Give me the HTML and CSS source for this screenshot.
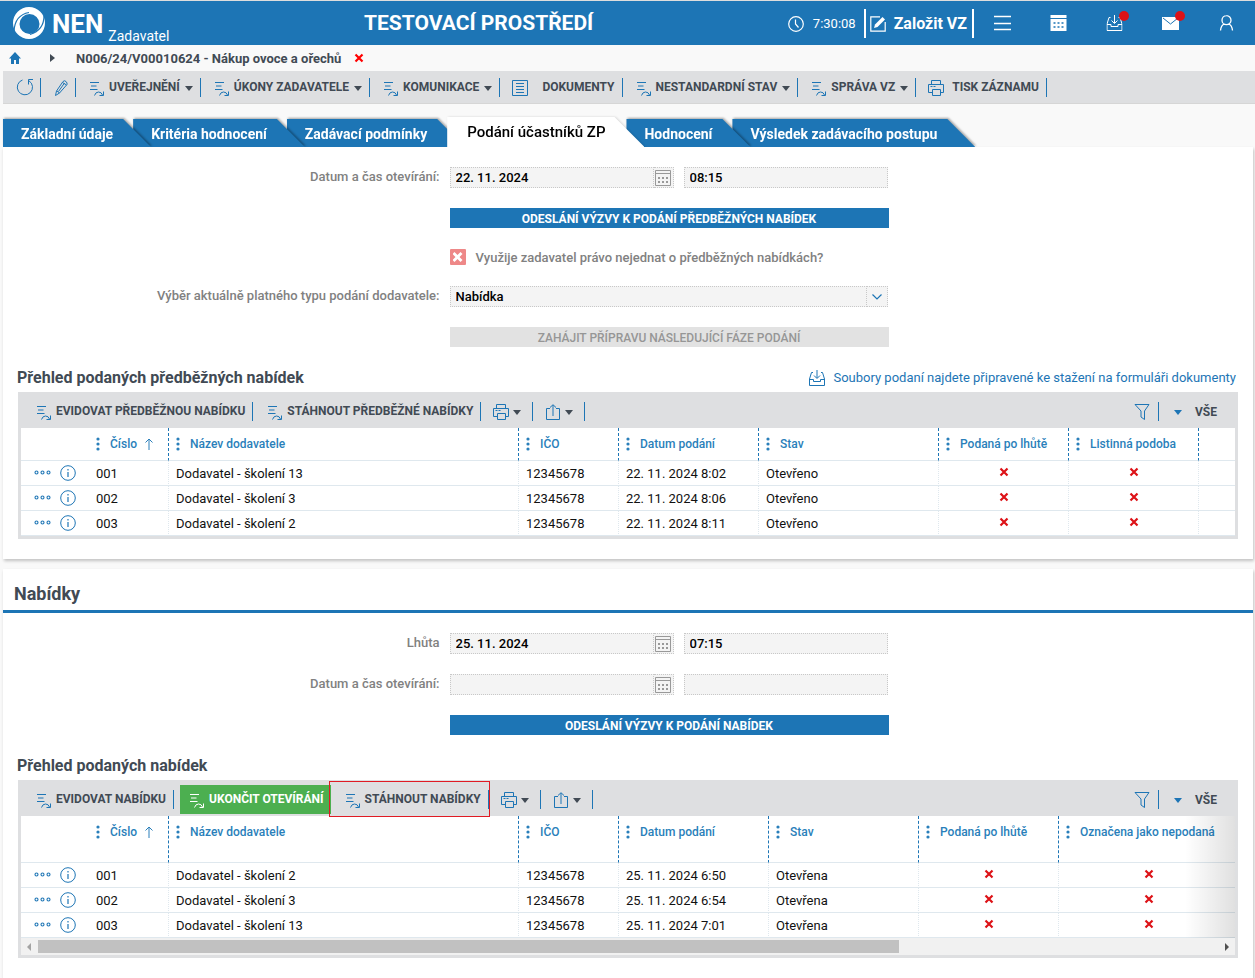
FILE: index.html
```html
<!DOCTYPE html>
<html lang="cs">
<head>
<meta charset="utf-8">
<title>NEN – Podání účastníků ZP</title>
<link rel="stylesheet" href="styles.css">
</head>
<body>
<svg class="sprite" aria-hidden="true">
  <symbol id="i-action" viewBox="0 0 14 14"><path d="M0 .5h9M1 4h5.500M0 7.500h7.500M4.500 13.500q1-3.500 4-3.500t4 3M13.500 9.500v4h-4" fill="none" stroke="currentColor"/></symbol>
  <symbol id="i-caret" viewBox="0 0 8 5"><path d="M0 0h8L4 5z" fill="currentColor"/></symbol>
  <symbol id="i-x" viewBox="0 0 10 10"><path d="M1.500 1.500l7 7M8.500 1.500l-7 7" stroke="currentColor" stroke-width="2.200" fill="none"/></symbol>
  <symbol id="i-print" viewBox="0 0 16 16"><path d="M3.500 4V.5h9V4M4.500 12.500h-4v-8h15v8h-3M4.500 9.500h8v6h-8zM2.500 6.500h2M5.500 6.500h2" fill="none" stroke="currentColor"/></symbol>
  <symbol id="i-share" viewBox="0 0 14 16"><path d="M4 4.500H.5v11h13v-11H10M7 12V1M4 3.500L7 .7l3 2.800" fill="none" stroke="currentColor"/></symbol>
  <symbol id="i-funnel" viewBox="0 0 16 16"><path d="M1 .5h14L10.500 7v8.500L7 13V7z" fill="none" stroke="currentColor"/></symbol>
  <symbol id="i-inbox" viewBox="0 0 16 16"><path d="M4 2.500H2.500L.5 9v6.500h15V9l-2-6.500H12M.5 9.500h4v2h7v-2h4M8 0v8M5 5.500l3 3 3-3" fill="none" stroke="currentColor"/></symbol>
  <symbol id="i-cal" viewBox="0 0 16 16"><path d="M.5.500h15v15H.5zM.5 3.500h15" fill="none" stroke="currentColor"/><path d="M3 7h2v2H3zM7 7h2v2H7zM11 7h2v2h-2zM3 11h2v2H3zM7 11h2v2H7zM11 11h2v2h-2z" fill="currentColor"/></symbol>
  <symbol id="i-more" viewBox="0 0 17 5"><g fill="none" stroke="currentColor" stroke-width="1.100"><circle cx="2.500" cy="2.500" r="1.500"/><circle cx="8.500" cy="2.500" r="1.500"/><circle cx="14.500" cy="2.500" r="1.500"/></g></symbol>
  <symbol id="i-info" viewBox="0 0 16 16"><circle cx="8" cy="8" r="7.300" fill="none" stroke="currentColor"/><path d="M8 4v1.500M8 7v5" stroke="currentColor" stroke-width="1.200"/></symbol>
  <symbol id="i-dots" viewBox="0 0 4 14"><g fill="currentColor"><circle cx="2" cy="2" r="1.600"/><circle cx="2" cy="7" r="1.600"/><circle cx="2" cy="12" r="1.600"/></g></symbol>
  <symbol id="i-up" viewBox="0 0 8 12"><path d="M4 12V1M.5 4.500L4 1l3.500 3.500" fill="none" stroke="currentColor"/></symbol>
</svg>

<header class="topbar">
  <a class="brand" href="#">
    <svg class="brand-mark" viewBox="0 0 32 32" aria-hidden="true"><path fill="#fff" fill-rule="evenodd" d="M16 0a16 16 0 1 1 0 32a16 16 0 1 1 0-32zM16.500 7a10 10 0 1 0 0 20a10 10 0 1 0 0-20z"/><path d="M1 24Q2 8 16 5.500M31 9q0 14-14 18.500" fill="none" stroke="#1d75b5" stroke-width="1.200"/></svg>
    <span class="brand-name">NEN</span><span class="brand-role">Zadavatel</span>
  </a>
  <div class="env">TESTOVACÍ PROSTŘEDÍ</div>
  <div class="top-tools">
    <span class="clock"><svg class="ic16" viewBox="0 0 16 16" aria-hidden="true"><path d="M8 .7a7.300 7.300 0 1 1 0 14.600a7.300 7.300 0 1 1 0-14.600M7.500 3.500V8l3 3.500" fill="none" stroke="currentColor" stroke-width="1.200"/></svg>7:30:08</span>
    <button class="create"><svg class="ic16" viewBox="0 0 16 16" aria-hidden="true"><path d="M10 .8H.8v14.400h14.400V6" fill="none" stroke="currentColor" stroke-width="1.200"/><path d="M4 12l1-3.500L12.500 1 15 3.500 7.500 11z" fill="currentColor"/></svg>Založit VZ</button>
    <button class="nav-btn" aria-label="Menu"><svg viewBox="0 0 17 16"><path d="M0 1.500h17M0 8.500h17M0 14.500h17" stroke="currentColor" stroke-width="1.500"/></svg></button>
    <button class="nav-btn" aria-label="Kalendář"><svg viewBox="0 0 16 16"><path d="M0 0h16v3H0z M0 4h16v12H0z" fill="currentColor"/><path d="M3 8h2M7 8h2M11 8h2M3 12h2M7 12h2M11 12h2" stroke="#1d75b5" stroke-width="1.500"/></svg></button>
    <button class="nav-btn has-dot" aria-label="Ke stažení"><svg viewBox="0 0 16 16"><use href="#i-inbox"/></svg></button>
    <button class="nav-btn has-dot" aria-label="Zprávy"><svg viewBox="0 0 17 16"><path d="M0 2h17v13H0z" fill="currentColor"/><path d="M1 3l7.500 6L16 3" stroke="#1d75b5" fill="none"/></svg></button>
    <button class="nav-btn" aria-label="Uživatel"><svg viewBox="0 0 16 16"><path d="M8 .7a4.300 4.300 0 1 1 0 9a4.300 4.300 0 1 1 0-9M2 15.500q.5-5.500 4-6.500M14 15.500q-.5-5.500-4-6.500" fill="none" stroke="currentColor" stroke-width="1.300"/></svg></button>
  </div>
</header>

<nav class="crumbs" aria-label="Drobečková navigace">
  <a class="home" href="#" aria-label="Domů"><svg viewBox="0 0 12 12"><path d="M6 0l6 6.500h-2V12H7V8H5v4H2V6.500H0z" fill="currentColor"/></svg></a>
  <svg class="crumb-arrow" viewBox="0 0 5 8" aria-hidden="true"><path d="M0 0l5 4-5 4z" fill="currentColor"/></svg>
  <span class="crumb-title">N006/24/V00010624 - Nákup ovoce a ořechů</span>
  <button class="crumb-close" aria-label="Zavřít"><svg viewBox="0 0 10 10"><use href="#i-x"/></svg></button>
</nav>

<div class="toolbar">
  <button class="tool icon-tool" aria-label="Obnovit"><svg class="ic18" viewBox="0 0 18 18"><path d="M6.500 2A7.600 7.600 0 1 0 13 2.800M17 1.500h-4.500v5" fill="none" stroke="currentColor"/></svg></button>
  <button class="tool icon-tool pen" aria-label="Upravit"><svg class="ic16" viewBox="0 0 16 16"><path d="M2.500 15.500L3.500 11 10 1.500q1.500-1.500 3 0t1 3L6.500 13zM4 11l2.500 2M5.500 11.500L11.500 3M9.500 2.500l4 2.500" fill="none" stroke="currentColor"/></svg></button>
  <button class="tool"><svg class="ic14"><use href="#i-action"/></svg><span>UVEŘEJNĚNÍ</span><svg class="caret"><use href="#i-caret"/></svg></button>
  <button class="tool"><svg class="ic14"><use href="#i-action"/></svg><span>ÚKONY ZADAVATELE</span><svg class="caret"><use href="#i-caret"/></svg></button>
  <button class="tool"><svg class="ic14"><use href="#i-action"/></svg><span>KOMUNIKACE</span><svg class="caret"><use href="#i-caret"/></svg></button>
  <button class="tool wide"><svg class="ic16" viewBox="0 0 16 16"><path d="M.5.500h15v15H.5zM4 3.500h8M4 6.500h8M4 9.500h8M4 12.500h8" fill="none" stroke="currentColor"/></svg><span>DOKUMENTY</span></button>
  <button class="tool"><svg class="ic14"><use href="#i-action"/></svg><span>NESTANDARDNÍ STAV</span><svg class="caret"><use href="#i-caret"/></svg></button>
  <button class="tool"><svg class="ic14"><use href="#i-action"/></svg><span>SPRÁVA VZ</span><svg class="caret"><use href="#i-caret"/></svg></button>
  <button class="tool print"><svg class="ic16"><use href="#i-print"/></svg><span>TISK ZÁZNAMU</span></button>
</div>

<nav class="tabs" aria-label="Záložky">
  <div class="tab t1"><a href="#">Základní údaje</a></div>
  <div class="tab t2"><a href="#">Kritéria hodnocení</a></div>
  <div class="tab t3"><a href="#">Zadávací podmínky</a></div>
  <div class="tab active"><a href="#" aria-current="page">Podání účastníků ZP</a></div>
  <div class="tab t5"><a href="#">Hodnocení</a></div>
  <div class="tab t6"><a href="#">Výsledek zadávacího postupu</a></div>
</nav>

<main>
<section class="panel first">
  <div class="form">
    <label for="d1">Datum a čas otevírání:</label>
    <div class="pair">
      <div class="date"><input id="d1" type="text" value="22. 11. 2024" readonly><button aria-label="Vybrat datum"><svg class="ic16"><use href="#i-cal"/></svg></button></div>
      <input class="time" type="text" value="08:15" aria-label="Čas otevírání" readonly>
    </div>
    <button class="btn">ODESLÁNÍ VÝZVY K PODÁNÍ PŘEDBĚŽNÝCH NABÍDEK</button>
    <div class="check"><input id="c1" type="checkbox"><label for="c1">Využije zadavatel právo nejednat o předběžných nabídkách?</label></div>
    <label for="s1">Výběr aktuálně platného typu podání dodavatele:</label>
    <div class="select"><select id="s1"><option>Nabídka</option></select><span class="select-arrow"><svg viewBox="0 0 10 6" aria-hidden="true"><path d="M.5.500L5 5 9.500.5" fill="none" stroke="currentColor" stroke-width="1.200"/></svg></span></div>
    <button class="btn" disabled>ZAHÁJIT PŘÍPRAVU NÁSLEDUJÍCÍ FÁZE PODÁNÍ</button>
  </div>

  <div class="list-head">
    <h2>Přehled podaných předběžných nabídek</h2>
    <a href="#"><svg class="ic16"><use href="#i-inbox"/></svg>Soubory podaní najdete připravené ke stažení na formuláři dokumenty</a>
  </div>
  <div class="grid-box">
    <div class="grid-bar">
      <button class="tool"><svg class="ic14"><use href="#i-action"/></svg><span>EVIDOVAT PŘEDBĚŽNOU NABÍDKU</span></button>
      <button class="tool"><svg class="ic14"><use href="#i-action"/></svg><span>STÁHNOUT PŘEDBĚŽNÉ NABÍDKY</span></button>
      <button class="tool mini" aria-label="Tisk"><svg class="ic16"><use href="#i-print"/></svg><svg class="caret"><use href="#i-caret"/></svg></button>
      <button class="tool mini" aria-label="Export"><svg class="ic16"><use href="#i-share"/></svg><svg class="caret"><use href="#i-caret"/></svg></button>
      <div class="grid-filter">
        <button class="tool funnel" aria-label="Filtr"><svg class="ic16"><use href="#i-funnel"/></svg></button>
        <button class="all"><svg class="caret"><use href="#i-caret"/></svg>VŠE</button>
      </div>
    </div>
    <table>
      <colgroup><col class="w-act"><col class="w-num"><col class="w-name"><col class="w-ico"><col class="w-140"><col class="w-180"><col class="w-130"><col class="w-130"><col></colgroup>
      <thead><tr>
        <th class="plain"></th>
        <th><svg class="dots"><use href="#i-dots"/></svg>Číslo<svg class="sort"><use href="#i-up"/></svg></th>
        <th><svg class="dots"><use href="#i-dots"/></svg>Název dodavatele</th>
        <th><svg class="dots"><use href="#i-dots"/></svg>IČO</th>
        <th><svg class="dots"><use href="#i-dots"/></svg>Datum podání</th>
        <th><svg class="dots"><use href="#i-dots"/></svg>Stav</th>
        <th><svg class="dots"><use href="#i-dots"/></svg>Podaná po lhůtě</th>
        <th><svg class="dots"><use href="#i-dots"/></svg>Listinná podoba</th>
        <th class="plain"></th>
      </tr></thead>
      <tbody>
        <tr><td class="act"><svg class="more"><use href="#i-more"/></svg><svg class="ic16"><use href="#i-info"/></svg></td><td>001</td><td>Dodavatel - školení 13</td><td>12345678</td><td>22. 11. 2024 8:02</td><td>Otevřeno</td><td class="no"><svg><use href="#i-x"/></svg></td><td class="no"><svg><use href="#i-x"/></svg></td><td class="last"></td></tr>
        <tr><td class="act"><svg class="more"><use href="#i-more"/></svg><svg class="ic16"><use href="#i-info"/></svg></td><td>002</td><td>Dodavatel - školení 3</td><td>12345678</td><td>22. 11. 2024 8:06</td><td>Otevřeno</td><td class="no"><svg><use href="#i-x"/></svg></td><td class="no"><svg><use href="#i-x"/></svg></td><td class="last"></td></tr>
        <tr><td class="act"><svg class="more"><use href="#i-more"/></svg><svg class="ic16"><use href="#i-info"/></svg></td><td>003</td><td>Dodavatel - školení 2</td><td>12345678</td><td>22. 11. 2024 8:11</td><td>Otevřeno</td><td class="no"><svg><use href="#i-x"/></svg></td><td class="no"><svg><use href="#i-x"/></svg></td><td class="last"></td></tr>
      </tbody>
    </table>
  </div>
</section>

<section class="panel">
  <h1>Nabídky</h1>
  <div class="form">
    <label for="d2">Lhůta</label>
    <div class="pair">
      <div class="date"><input id="d2" type="text" value="25. 11. 2024" readonly><button aria-label="Vybrat datum"><svg class="ic16"><use href="#i-cal"/></svg></button></div>
      <input class="time" type="text" value="07:15" aria-label="Čas lhůty" readonly>
    </div>
    <label for="d3">Datum a čas otevírání:</label>
    <div class="pair">
      <div class="date"><input id="d3" type="text" readonly><button aria-label="Vybrat datum"><svg class="ic16"><use href="#i-cal"/></svg></button></div>
      <input class="time" type="text" aria-label="Čas otevírání nabídek" readonly>
    </div>
    <button class="btn">ODESLÁNÍ VÝZVY K PODÁNÍ NABÍDEK</button>
  </div>

  <div class="list-head"><h2>Přehled podaných nabídek</h2></div>
  <div class="grid-box">
    <div class="grid-bar">
      <button class="tool"><svg class="ic14"><use href="#i-action"/></svg><span>EVIDOVAT NABÍDKU</span></button>
      <button class="tool green"><svg class="ic14"><use href="#i-action"/></svg><span>UKONČIT OTEVÍRÁNÍ</span></button>
      <button class="tool marked"><svg class="ic14"><use href="#i-action"/></svg><span>STÁHNOUT NABÍDKY</span></button>
      <button class="tool mini" aria-label="Tisk"><svg class="ic16"><use href="#i-print"/></svg><svg class="caret"><use href="#i-caret"/></svg></button>
      <button class="tool mini" aria-label="Export"><svg class="ic16"><use href="#i-share"/></svg><svg class="caret"><use href="#i-caret"/></svg></button>
      <div class="grid-filter">
        <button class="tool funnel" aria-label="Filtr"><svg class="ic16"><use href="#i-funnel"/></svg></button>
        <button class="all"><svg class="caret"><use href="#i-caret"/></svg>VŠE</button>
      </div>
    </div>
    <div class="faded">
    <table class="tall">
      <colgroup><col class="w-act"><col class="w-num"><col class="w-name"><col class="w-ico"><col class="w-150"><col class="w-150"><col class="w-140"><col></colgroup>
      <thead><tr>
        <th class="plain"></th>
        <th><svg class="dots"><use href="#i-dots"/></svg>Číslo<svg class="sort"><use href="#i-up"/></svg></th>
        <th><svg class="dots"><use href="#i-dots"/></svg>Název dodavatele</th>
        <th><svg class="dots"><use href="#i-dots"/></svg>IČO</th>
        <th><svg class="dots"><use href="#i-dots"/></svg>Datum podání</th>
        <th><svg class="dots"><use href="#i-dots"/></svg>Stav</th>
        <th><svg class="dots"><use href="#i-dots"/></svg>Podaná po lhůtě</th>
        <th class="plain"><svg class="dots"><use href="#i-dots"/></svg>Označena jako nepodaná</th>
      </tr></thead>
      <tbody>
        <tr><td class="act"><svg class="more"><use href="#i-more"/></svg><svg class="ic16"><use href="#i-info"/></svg></td><td>001</td><td>Dodavatel - školení 2</td><td>12345678</td><td>25. 11. 2024 6:50</td><td>Otevřena</td><td class="no"><svg><use href="#i-x"/></svg></td><td class="no last"><svg><use href="#i-x"/></svg></td></tr>
        <tr><td class="act"><svg class="more"><use href="#i-more"/></svg><svg class="ic16"><use href="#i-info"/></svg></td><td>002</td><td>Dodavatel - školení 3</td><td>12345678</td><td>25. 11. 2024 6:54</td><td>Otevřena</td><td class="no"><svg><use href="#i-x"/></svg></td><td class="no last"><svg><use href="#i-x"/></svg></td></tr>
        <tr><td class="act"><svg class="more"><use href="#i-more"/></svg><svg class="ic16"><use href="#i-info"/></svg></td><td>003</td><td>Dodavatel - školení 13</td><td>12345678</td><td>25. 11. 2024 7:01</td><td>Otevřena</td><td class="no"><svg><use href="#i-x"/></svg></td><td class="no last"><svg><use href="#i-x"/></svg></td></tr>
      </tbody>
    </table>
    </div>
    <div class="scrollbar" aria-hidden="true">
      <svg class="sb-left" viewBox="0 0 4 8"><path d="M4 0L0 4l4 4z" fill="currentColor"/></svg>
      <div class="sb-track"><div class="sb-thumb"></div></div>
      <svg class="sb-right" viewBox="0 0 4 8"><path d="M0 0l4 4-4 4z" fill="currentColor"/></svg>
    </div>
  </div>
</section>
</main>
</body>
</html>
```
FILE: styles.css
```css
:root {
  --blue: #1d75b5;
  --grey: #dedfe1;
  --ink: #414a54;
  --label: #818181;
  --line: #dfe8ee;
}

* { box-sizing: border-box; }

body {
  margin: 0;
  background: #f9f9f9;
  color: #111;
  font: 13px/20px Roboto, "Noto Sans", sans-serif;
}

button, input, select { font: inherit; color: inherit; margin: 0; border-radius: 0; }
button { background: none; border: 0; padding: 0; }
a { color: inherit; text-decoration: none; }
h1, h2 { margin: 0; color: var(--ink); }
svg { display: block; flex: none; }

.sprite { position: absolute; width: 0; height: 0; }
.ic14 { width: 14px; height: 14px; }
.ic16 { width: 16px; height: 16px; }
.ic18 { width: 18px; height: 18px; }
.caret { width: 8px; height: 5px; color: var(--ink); }

/* Top bar */
.topbar {
  display: flex;
  align-items: center;
  height: 45px;
  padding: 0 1px 0 13px;
  border-top: 1px solid #ddd;
  background: var(--blue);
  color: #fff;
}
.brand { display: flex; align-items: center; height: 44px; }
.brand-mark { width: 32px; height: 32px; margin-right: 7px; }
.brand-name { padding-top: 2px; font-size: 26px; font-weight: 700; }
.brand-role { align-self: flex-end; font-size: 14px; line-height: 18px; margin-left: 5px; }
.env { flex: 1; font-size: 21px; font-weight: 700; text-align: center; }
.top-tools { display: flex; align-items: center; }
.clock { display: flex; align-items: center; gap: 9px; padding: 1px 8px 0 0; }
.create {
  display: flex;
  align-items: center;
  gap: 8px;
  height: 29px;
  padding: 2px 5px 0 4px;
  border: solid #fff;
  border-width: 0 2px;
  font-size: 16px;
  font-weight: 700;
  white-space: nowrap;
}
.nav-btn { position: relative; display: flex; justify-content: center; width: 56px; }
.nav-btn svg { width: 17px; height: 16px; }
.has-dot::after {
  content: "";
  position: absolute;
  top: -4px;
  right: 13px;
  width: 10px;
  height: 10px;
  border-radius: 50%;
  background: #dd1217;
}

/* Breadcrumbs */
.crumbs { display: flex; align-items: center; height: 26px; padding-left: 9px; color: var(--ink); }
.home { color: var(--blue); }
.home svg { width: 12px; height: 12px; }
.crumb-arrow { width: 5px; height: 8px; margin: 0 21px 0 29px; }
.crumb-title { padding-top: 2px; font-weight: 700; }
.crumb-close { margin-left: 13px; color: #f00; }
.crumb-close svg { width: 10px; height: 10px; }

/* Toolbars */
.toolbar {
  display: flex;
  align-items: center;
  height: 33px;
  margin-left: 3px;
  background: var(--grey);
  border-bottom: 1px solid #d6d6d6;
}
.tool {
  display: flex;
  align-items: center;
  height: 19px;
  padding: 0 7px 0 14px;
  border-right: 1px solid var(--blue);
  color: var(--blue);
  font-size: 12px;
  font-weight: 700;
  line-height: 18px;
  white-space: nowrap;
}
.tool span { color: var(--ink); margin-left: 5px; }
.tool .ic14 { margin-top: 4px; }
.tool .ic16 { margin-top: 1px; }
.tool .caret { margin: 2px 0 0 5px; }
.icon-tool { padding: 0 6px 0 13px; }
.tool.pen { padding-left: 12px; }
.wide { padding-left: 12px; }
.wide span { margin-left: 14px; }
.print { padding-left: 12px; }
.print span { margin-left: 8px; }

/* Tabs */
.tabs { display: flex; align-items: flex-end; height: 43px; padding-left: 3px; overflow: hidden; }
.tab { margin-right: -18px; filter: drop-shadow(1px -1px 1px rgba(0, 0, 0, .35)); position: relative; }
.tab a {
  display: block;
  height: 28px;
  padding: 0 38px 0 18px;
  background: var(--blue);
  clip-path: polygon(0 0, calc(100% - 28px) 0, 100% 100%, 0 100%);
  color: #fff;
  font-size: 14px;
  font-weight: 700;
  line-height: 31px;
  white-space: nowrap;
}
.t1 { z-index: 3; }
.t2 { z-index: 2; }
.t3 { z-index: 1; }
.t5 { z-index: 2; }
.t6 { z-index: 1; }
.active { z-index: 5; filter: drop-shadow(1px 0 1px rgba(0, 0, 0, .15)); }
.tab.active a {
  height: 30px;
  padding: 0 39px 0 20px;
  background: #fff;
  clip-path: polygon(0 0, calc(100% - 30px) 0, 100% 100%, 0 100%);
  color: #000;
  font-size: 15px;
  font-weight: 500;
}

/* Panels and form */
.panel {
  margin: 0 2px 10px 3px;
  padding-bottom: 20px;
  background: #fff;
  box-shadow: 1px 2px 3px rgba(0, 0, 0, .22);
}
.panel:last-child { margin-bottom: 0; }
.panel h1 {
  padding: 13px 11px 4px;
  border-bottom: 3px solid var(--blue);
  font-size: 18px;
  line-height: 24px;
}
.form {
  display: grid;
  grid-template-columns: calc(35% - 1px) minmax(0, 439px);
  column-gap: 10px;
  row-gap: 20px;
  padding: 20px 0;
}
.form label { color: var(--label); font-weight: 500; text-align: right; }
.form > div, .form > .btn { grid-column: 2; }
.form > label { grid-column: 1; }
.pair { display: grid; grid-template-columns: 224fr 204fr; gap: 10px; padding-right: 1px; }
.date { display: flex; min-width: 0; }
.pair input, .date button, .select select, .select-arrow {
  height: 21px;
  border: 1px dotted #c8c8c8;
  background: #f4f4f4;
}
.pair input, .select select { min-width: 0; padding: 0 5px; color: #000; font-weight: 500; line-height: 19px; }
.date input { flex: 1; }
.date button { display: grid; place-items: center; width: 20px; border-left: 0; color: #999; }
.btn { height: 20px; padding-top: 2px; background: var(--blue); color: #fff; font-size: 12px; font-weight: 700; line-height: 18px; }
.btn:disabled { background: #e2e2e2; color: #969696; font-weight: 500; }
.check { display: flex; align-items: center; gap: 10px; height: 18px; }
.check label { padding-top: 2px; }
.check input {
  display: grid;
  place-items: center;
  appearance: none;
  width: 16px;
  height: 16px;
  border-radius: 1px;
  background: #ee8888;
}
.check input::before {
  content: "";
  width: 10px;
  height: 10px;
  background: #fff;
  clip-path: polygon(20% 0, 50% 30%, 80% 0, 100% 20%, 70% 50%, 100% 80%, 80% 100%, 50% 70%, 20% 100%, 0 80%, 30% 50%, 0 20%);
}
.select { display: flex; padding-right: 1px; }
.select select { flex: 1; appearance: none; }
.select-arrow { display: grid; place-items: center; width: 21px; border-left: 0; color: var(--blue); }
.select-arrow svg { width: 10px; height: 6px; }

/* Lists */
.list-head {
  display: flex;
  justify-content: space-between;
  align-items: center;
  margin: 1px 17px 4px 14px;
}
.list-head h2 { font-size: 16px; line-height: 20px; }
.list-head a { display: flex; align-items: center; gap: 8px; color: var(--blue); }
.grid-box { margin: 0 15px; border: solid var(--grey); border-width: 0 3px 3px; }
.grid-bar { display: flex; align-items: center; height: 36px; padding: 2px 0 0 1px; background: var(--grey); }
.grid-bar .tool { padding: 0 7px 0 15px; }
.grid-bar .mini { padding: 0 11px 0 12px; }
.grid-bar .mini .caret { margin-left: 4px; }
.grid-filter { display: flex; align-items: center; margin-left: auto; }
.grid-bar .funnel { padding: 0 8px; }
.all {
  display: flex;
  align-items: center;
  gap: 13px;
  padding: 2px 18px 0 15px;
  color: var(--ink);
  font-size: 12px;
  font-weight: 700;
}
.all .caret { color: var(--blue); }
.grid-bar .green {
  height: 29px;
  margin-left: 6px;
  padding: 0 7px 0 10px;
  border: 0;
  background: #4caf50;
}
.green, .green span { color: #fff; }
.marked { position: relative; z-index: 1; }
.marked::after {
  content: "";
  position: absolute;
  inset: -9px -2px -8px -2px;
  border: 1px solid #e01b24;
}

table { width: 100%; table-layout: fixed; border-spacing: 0; background: #fff; }
.w-act { width: 68px; }
.w-num { width: 80px; }
.w-name { width: 350px; }
.w-ico { width: 100px; }
.w-130 { width: 130px; }
.w-140 { width: 140px; }
.w-150 { width: 150px; }
.w-180 { width: 180px; }
th {
  height: 33px;
  padding: 6px 0 0 7px;
  border-right: 1px dashed var(--blue);
  border-bottom: 1px solid var(--line);
  color: #2a7fba;
  font-size: 12px;
  font-weight: 500;
  text-align: left;
  vertical-align: top;
  white-space: nowrap;
}
.tall th { height: 47px; }
th.plain { border-right: 0; }
th svg { display: inline-block; vertical-align: middle; }
.dots { width: 4px; height: 14px; margin: 0 10px 2px 0; }
.sort { width: 8px; height: 12px; margin: 0 0 1px 8px; }
td {
  height: 25px;
  padding: 2px 0 0 7px;
  border-right: 1px dotted var(--line);
  border-bottom: 1px solid var(--line);
  white-space: nowrap;
}
td.act, td.last { border-right: 0; }
td.act { padding: 0 0 0 13px; color: var(--blue); }
td.act svg { display: inline-block; vertical-align: middle; }
td.act .ic16 { margin-bottom: 1px; }
.more { width: 17px; height: 5px; margin: 0 9px 2px 0; }
td.no { padding: 0; color: #dd1217; }
td.no.last { padding-left: 4px; }
td.no svg { width: 10px; height: 10px; margin: 0 auto 2px; }
.faded { position: relative; }
.faded::after {
  content: "";
  position: absolute;
  inset: 0 0 0 auto;
  width: 50px;
  background: linear-gradient(to right, transparent, rgba(0, 0, 0, .12));
}

.scrollbar { display: flex; align-items: center; height: 17px; padding: 0 6px; background: #f1f1f1; }
.sb-left, .sb-right { width: 4px; height: 8px; color: #a3a3a3; }
.sb-right { color: #505050; }
.sb-track { flex: 1; margin: 0 7px; }
.sb-thumb { width: 73%; height: 13px; background: #c1c1c1; }
```
